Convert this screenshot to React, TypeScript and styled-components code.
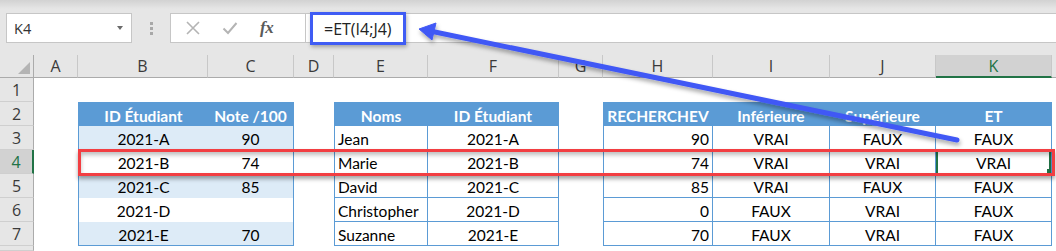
import React from 'react';
import styled, { createGlobalStyle, css } from 'styled-components';

const GlobalStyle = createGlobalStyle`
  html, body {
    margin: 0;
    padding: 0;
    background: #ffffff;
  }
`;

const COLS = '34px 44px 130px 86px 40px 94px 131px 44px 110px 117px 106px 116px 1fr';
const LETTERS = ['A', 'B', 'C', 'D', 'E', 'F', 'G', 'H', 'I', 'J', 'K', ''];
const BLUE = '#5b9bd5';
const GREEN = '#217346';

const Page = styled.div`
  position: relative;
  width: 1056px;
  height: 251px;
  overflow: hidden;
  background: #ffffff;
`;

const Toolbar = styled.div`
  display: flex;
  align-items: flex-start;
  box-sizing: border-box;
  height: 55px;
  padding: 13px 0 0 6px;
  background: linear-gradient(#d2d2d2 0, #e6e6e6 9px, #e6e6e6 100%);
  font-family: 'Open Sans', 'Noto Sans', sans-serif;
`;

const NameBox = styled.div`
  display: flex;
  align-items: center;
  justify-content: space-between;
  box-sizing: border-box;
  width: 126px;
  height: 30px;
  padding: 0 8px 0 7px;
  background: #ffffff;
  border: 1px solid #c6c6c6;
  font-size: 14.5px;
  color: #333333;
`;

const DropArrow = styled.span`
  width: 0;
  height: 0;
  border-left: 3.5px solid transparent;
  border-right: 3.5px solid transparent;
  border-top: 4px solid #6a6a6a;
`;

const Grip = styled.div`
  display: flex;
  flex-direction: column;
  align-items: center;
  justify-content: center;
  gap: 2px;
  width: 38px;
  height: 30px;
  span {
    width: 3px;
    height: 3px;
    background: #a8a8a8;
  }
`;

const FxBox = styled.div`
  display: flex;
  align-items: center;
  box-sizing: border-box;
  width: 136px;
  height: 30px;
  padding-left: 15px;
  gap: 22px;
  background: #ffffff;
  border: 1px solid #c6c6c6;
`;

const FxLabel = styled.span`
  font-family: 'Liberation Serif', 'DejaVu Serif', serif;
  font-style: italic;
  font-weight: bold;
  font-size: 17px;
  color: #5a5a5a;
  letter-spacing: -0.5px;
`;

const FormulaInput = styled.div`
  flex: 1;
  display: flex;
  align-items: flex-start;
  box-sizing: border-box;
  height: 30px;
  background: #ffffff;
  border-top: 1px solid #c6c6c6;
  border-bottom: 1px solid #c6c6c6;
`;

const FormulaHighlight = styled.div`
  display: flex;
  align-items: center;
  box-sizing: border-box;
  width: 96px;
  height: 33px;
  margin: -2px 0 0 4px;
  padding-left: 11px;
  border: 3px solid #3f5cf4;
  box-shadow: 1px 2px 4px rgba(0, 0, 0, 0.3);
  font-size: 16px;
  color: #222222;
  background: #ffffff;
`;

const Sheet = styled.div`
  display: grid;
  grid-template-columns: ${COLS};
  grid-template-rows: 23px repeat(7, 24px) 1fr;
  height: 196px;
  background: #e6e6e6;
`;

const headerText = css`
  font-family: 'Open Sans', 'Noto Sans', sans-serif;
  font-size: 16px;
  color: #3a3a3a;
`;

const Corner = styled.div`
  position: relative;
  background: #e6e6e6;
  border-right: 1px solid #ababab;
  border-bottom: 1px solid #ababab;
  &::after {
    content: '';
    position: absolute;
    right: 3px;
    bottom: 3px;
    width: 0;
    height: 0;
    border-left: 12px solid transparent;
    border-bottom: 12px solid #b4b4b4;
  }
`;

const ColHeader = styled.div<{ $selected?: boolean }>`
  ${headerText};
  display: flex;
  align-items: center;
  justify-content: center;
  box-sizing: border-box;
  border-right: 1px solid #c8c8c8;
  border-bottom: 1px solid #ababab;
  background: #e6e6e6;
  ${(p) =>
    p.$selected &&
    css`
      background: #d2d2d2;
      color: ${GREEN};
      border-bottom: 2px solid ${GREEN};
    `}
`;

const RowHeader = styled.div<{ $selected?: boolean }>`
  ${headerText};
  display: flex;
  align-items: center;
  justify-content: center;
  box-sizing: border-box;
  background: #e6e6e6;
  border-right: 1px solid #ababab;
  border-bottom: 1px solid #cfcfcf;
  ${(p) =>
    p.$selected &&
    css`
      background: #d2d2d2;
      color: ${GREEN};
      border-right: 2px solid ${GREEN};
    `}
`;

type Align = 'left' | 'center' | 'right';

interface CellProps {
  $fill?: string;
  $align?: Align;
  $head?: boolean;
  $bl?: boolean;
  $br?: boolean;
  $bt?: boolean;
  $bb?: boolean;
  $selected?: boolean;
}

const Cell = styled.div<CellProps>`
  position: relative;
  box-sizing: border-box;
  padding: 2px 3px 0 3px;
  line-height: 22px;
  overflow: visible;
  white-space: nowrap;
  font-family: Lato, 'Open Sans', sans-serif;
  font-size: 15.5px;
  color: #000000;
  background: ${(p) => p.$fill || '#ffffff'};
  text-align: ${(p) => p.$align || 'center'};
  border-left: ${(p) => (p.$bl ? `1px solid ${BLUE}` : 'none')};
  border-right: ${(p) => (p.$br ? `1px solid ${BLUE}` : 'none')};
  border-top: ${(p) => (p.$bt ? `1px solid ${BLUE}` : 'none')};
  border-bottom: ${(p) => (p.$bb ? `1px solid ${BLUE}` : 'none')};
  ${(p) =>
    p.$head &&
    css`
      color: #ffffff;
      font-weight: bold;
    `}
  ${(p) =>
    p.$selected &&
    css`
      box-shadow: inset 2px 0 0 ${GREEN}, inset -2px 0 0 ${GREEN};
      &::after {
        content: '';
        position: absolute;
        right: 0;
        bottom: 0;
        width: 4px;
        height: 4px;
        background: ${GREEN};
      }
    `}
`;

const RowFrame = styled.div`
  position: absolute;
  left: 78px;
  top: 149px;
  width: 977px;
  height: 27px;
  box-sizing: border-box;
  border: 3px solid #f23e42;
  box-shadow: 0 3px 4px rgba(0, 0, 0, 0.35), inset 0 3px 4px rgba(0, 0, 0, 0.25);
  pointer-events: none;
`;

const ArrowLayer = styled.svg`
  position: absolute;
  left: 0;
  top: 0;
  pointer-events: none;
`;

const CrossIcon = () => (
  <svg width="14" height="14" viewBox="0 0 14 14">
    <path d="M1 1 L13 13 M13 1 L1 13" stroke="#b4b4b4" strokeWidth="1.6" fill="none" />
  </svg>
);

const CheckIcon = () => (
  <svg width="16" height="14" viewBox="0 0 16 14">
    <path d="M1.5 7.5 L6 12 L14.5 2" stroke="#b4b4b4" strokeWidth="2" fill="none" />
  </svg>
);

const table1 = [
  ['2021-A', '90'],
  ['2021-B', '74'],
  ['2021-C', '85'],
  ['2021-D', ''],
  ['2021-E', '70'],
];

const table2 = [
  ['Jean', '2021-A'],
  ['Marie', '2021-B'],
  ['David', '2021-C'],
  ['Christopher', '2021-D'],
  ['Suzanne', '2021-E'],
];

const table3 = [
  ['90', 'VRAI', 'FAUX', 'FAUX'],
  ['74', 'VRAI', 'VRAI', 'VRAI'],
  ['85', 'VRAI', 'FAUX', 'FAUX'],
  ['0', 'FAUX', 'VRAI', 'FAUX'],
  ['70', 'FAUX', 'VRAI', 'FAUX'],
];

// row index: 0 = row 1, 1 = header row 2, 2..6 = data rows 3..7, 7 = partial row 8
const renderRow = (r: number) => {
  const out: React.ReactNode[] = [];
  const key = (c: number) => `${r}-${c}`;
  const isHead = r === 1;
  const isData = r >= 2 && r <= 6;
  const d = r - 2;
  const last = r === 6;

  // A
  out.push(<Cell key={key(0)} />);

  // B, C : banded table
  if (isHead || isData) {
    const fill = isHead ? BLUE : d % 2 === 0 ? '#ddebf7' : '#ffffff';
    out.push(
      <Cell key={key(1)} $fill={fill} $head={isHead} $bl $bt={isHead} $bb={last}>
        {isHead ? 'ID Étudiant' : table1[d][0]}
      </Cell>,
      <Cell key={key(2)} $fill={fill} $head={isHead} $br $bt={isHead} $bb={last}>
        {isHead ? 'Note /100' : table1[d][1]}
      </Cell>
    );
  } else {
    out.push(<Cell key={key(1)} />, <Cell key={key(2)} />);
  }

  // D
  out.push(<Cell key={key(3)} />);

  // E, F
  if (isHead || isData) {
    const fill = isHead ? BLUE : '#ffffff';
    out.push(
      <Cell key={key(4)} $fill={fill} $head={isHead} $align={isHead ? 'center' : 'left'} $bl $br $bt={isHead} $bb>
        {isHead ? 'Noms' : table2[d][0]}
      </Cell>,
      <Cell key={key(5)} $fill={fill} $head={isHead} $br $bt={isHead} $bb>
        {isHead ? 'ID Étudiant' : table2[d][1]}
      </Cell>
    );
  } else {
    out.push(<Cell key={key(4)} />, <Cell key={key(5)} />);
  }

  // G
  out.push(<Cell key={key(6)} />);

  // H..K
  if (isHead || isData) {
    const fill = isHead ? BLUE : '#ffffff';
    const heads = ['RECHERCHEV', 'Inférieure', 'Supérieure', 'ET'];
    heads.forEach((h, i) => {
      out.push(
        <Cell
          key={key(7 + i)}
          $fill={fill}
          $head={isHead}
          $align={!isHead && i === 0 ? 'right' : 'center'}
          $bl={i === 0}
          $br
          $bt={isHead}
          $bb
          $selected={r === 3 && i === 3}
        >
          {isHead ? h : table3[d][i]}
        </Cell>
      );
    });
  } else {
    [7, 8, 9, 10].forEach((c) => out.push(<Cell key={key(c)} />));
  }

  out.push(<Cell key={key(11)} />);
  return out;
};

const App: React.FC = () => {
  return (
    <Page>
      <GlobalStyle />
      <Toolbar>
        <NameBox>
          K4
          <DropArrow />
        </NameBox>
        <Grip>
          <span />
          <span />
          <span />
        </Grip>
        <FxBox>
          <CrossIcon />
          <CheckIcon />
          <FxLabel>fx</FxLabel>
        </FxBox>
        <FormulaInput>
          <FormulaHighlight>=ET(I4;J4)</FormulaHighlight>
        </FormulaInput>
      </Toolbar>
      <Sheet>
        <Corner />
        {LETTERS.map((l, i) => (
          <ColHeader key={`h${i}`} $selected={l === 'K'}>
            {l}
          </ColHeader>
        ))}
        {Array.from({ length: 8 }).map((_, r) => (
          <React.Fragment key={`r${r}`}>
            <RowHeader $selected={r === 3}>{r < 7 ? r + 1 : ''}</RowHeader>
            {renderRow(r)}
          </React.Fragment>
        ))}
      </Sheet>
      <RowFrame />
      <ArrowLayer width="1056" height="251" viewBox="0 0 1056 251">
        <defs>
          <filter id="arrowShadow" x="-10%" y="-50%" width="120%" height="200%">
            <feDropShadow dx="1" dy="3" stdDeviation="2" floodColor="#000000" floodOpacity="0.35" />
          </filter>
        </defs>
        <g filter="url(#arrowShadow)" fill="#4158f5" stroke="#4158f5">
          <line x1="957" y1="140" x2="430" y2="31" strokeWidth="5" strokeLinecap="round" />
          <polygon points="419,29 432,40 436,23" strokeWidth="1" strokeLinejoin="round" />
        </g>
      </ArrowLayer>
    </Page>
  );
};

export default App;
